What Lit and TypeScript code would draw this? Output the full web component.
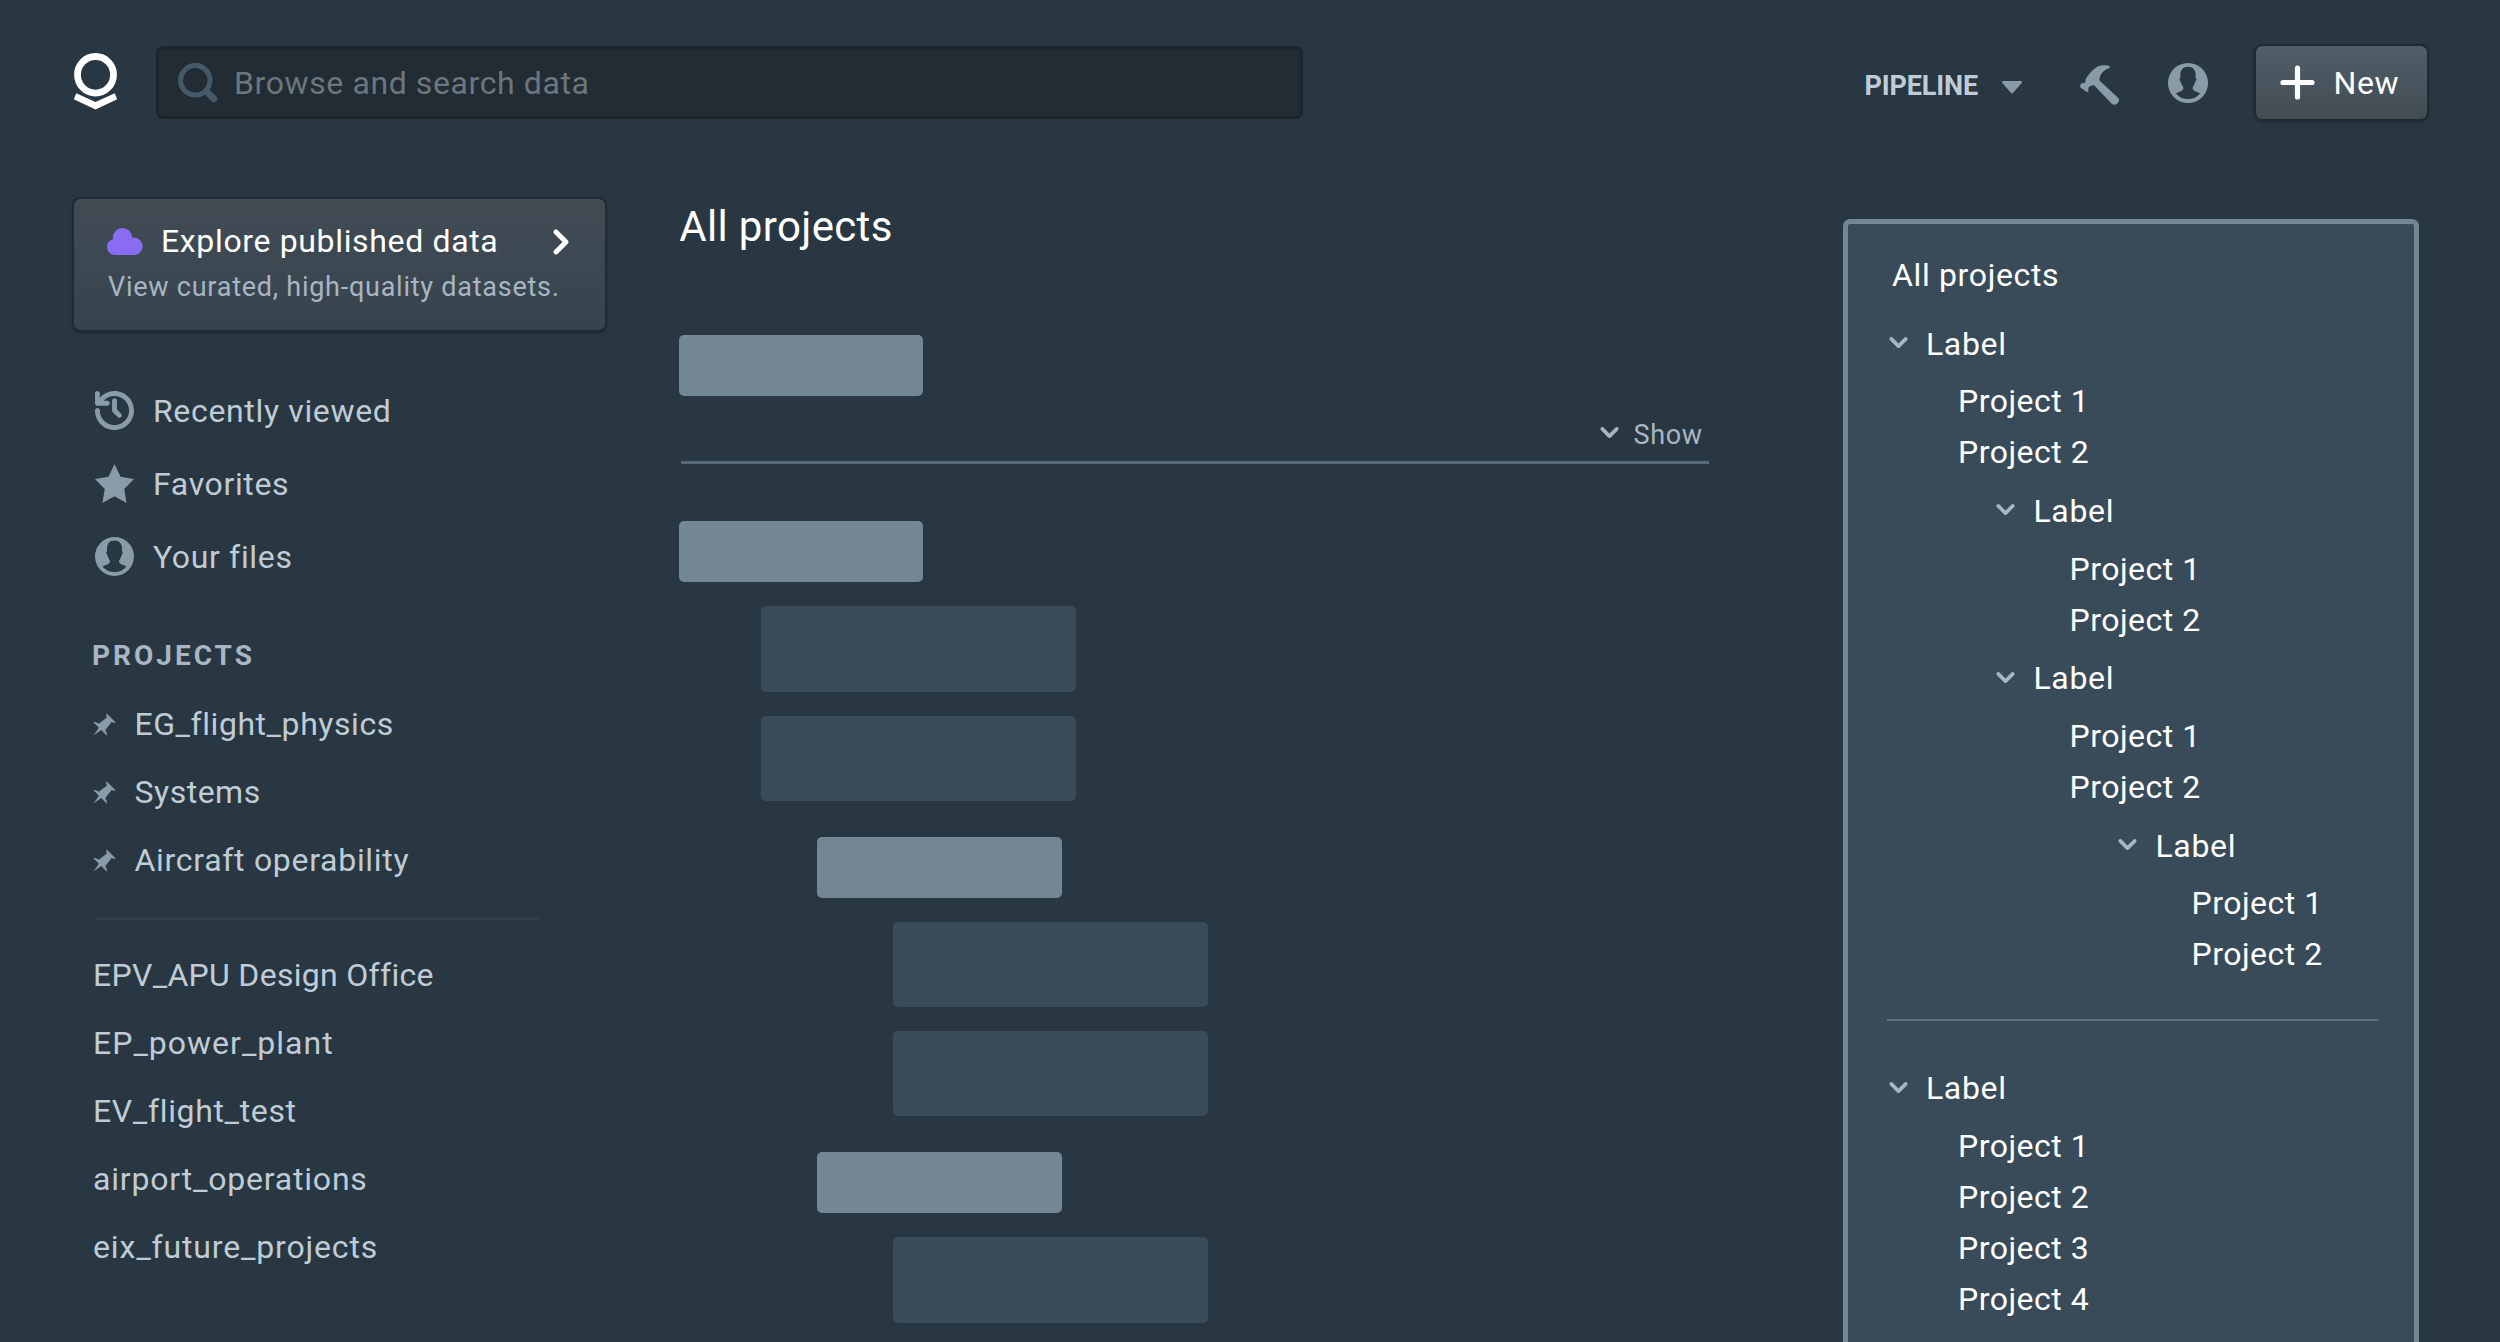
import { LitElement, html, css, svg } from "lit";
import { customElement } from "lit/decorators.js";

const CHEVRON_DOWN =
  "M12 5c-.28 0-.53.11-.71.29L8 8.59l-3.29-3.3a1.003 1.003 0 00-1.42 1.42l4 4c.18.18.43.29.71.29s.53-.11.71-.29l4-4A1.003 1.003 0 0012 5z";
const CHEVRON_RIGHT =
  "M10.71 7.29l-4-4a1.003 1.003 0 00-1.42 1.42L8.59 8 5.3 11.29c-.19.18-.3.43-.3.71a1.003 1.003 0 001.71.71l4-4c.18-.18.29-.43.29-.71 0-.28-.11-.53-.29-.71z";
const CARET_DOWN =
  "M12 6.5c0-.28-.22-.5-.5-.5h-7a.495.495 0 00-.37.83l3.5 4c.09.1.22.17.37.17s.28-.07.37-.17l3.5-4c.08-.09.13-.2.13-.33z";
const STAR =
  "M16 6.11l-5.53-.84L8 0 5.53 5.27 0 6.11l4 4.1L3.06 16 8 13.27 12.94 16 12 10.21l4-4.1z";
const HISTORY =
  "M8 3c-.55 0-1 .45-1 1v4c0 .28.11.53.29.71l2 2a1.003 1.003 0 001.42-1.42L9 7.59V4c0-.55-.45-1-1-1zm0-3a7.951 7.951 0 00-6 2.74V1c0-.55-.45-1-1-1S0 .45 0 1v4c0 .55.45 1 1 1h4c.55 0 1-.45 1-1s-.45-1-1-1H3.54c1.1-1.22 2.69-2 4.46-2 3.31 0 6 2.69 6 6s-2.69 6-6 6-6-2.69-6-6c0-.55-.45-1-1-1s-1 .45-1 1c0 4.42 3.58 8 8 8s8-3.58 8-8-3.58-8-8-8z";
const USER =
  "M8 0a8 8 0 100 16A8 8 0 008 0zM8 1.45c2 0 3.05 1.4 3.05 3.05 0 .5 0 1 .08 1.45.35.25.3 1-.13 1.35-.3 1-.65 1.75-1.1 2.3v.75c.35.95 2.2 1.05 2.95 1.85A6.3 6.3 0 018 14.4a6.3 6.3 0 01-4.85-2.2c.75-.8 2.6-.9 2.95-1.85V9.6C5.65 9.05 5.3 8.3 5 7.3c-.43-.35-.48-1.1-.13-1.35.08-.45.08-.95.08-1.45C4.95 2.85 6 1.45 8 1.45z";
const PIN =
  "M9.41.92c-.51.51-.41 1.5.15 2.56L4.34 7.54C2.8 6.48 1.45 6.05.92 6.58l3.54 3.54-3.54 4.95 4.95-3.54 3.54 3.54c.53-.53.1-1.88-.96-3.42l4.06-5.22c1.06.56 2.04.66 2.55.15L9.41.92z";

const icon = (path: string, size: number, cls = "") => html`
  <svg class="icon ${cls}" width=${size} height=${size} viewBox="0 0 16 16">
    ${svg`<path fill="currentColor" fill-rule="evenodd" d=${path}></path>`}
  </svg>
`;

interface TreeNode {
  label: string;
  children?: TreeNode[];
}
const leaves = (n: number): TreeNode[] =>
  Array.from({ length: n }, (_, i) => ({ label: `Project ${i + 1}` }));

const TREE: TreeNode[] = [
  {
    label: "Label",
    children: [
      ...leaves(2),
      { label: "Label", children: leaves(2) },
      {
        label: "Label",
        children: [...leaves(2), { label: "Label", children: leaves(2) }],
      },
    ],
  },
];
const TREE_BOTTOM: TreeNode[] = [{ label: "Label", children: leaves(4) }];

interface ProjectLink {
  name: string;
  tracking: number;
}
const PINNED: ProjectLink[] = [
  { name: "EG_flight_physics", tracking: 0.55 },
  { name: "Systems", tracking: 0.5 },
  { name: "Aircraft operability", tracking: 0.7 },
];
const PROJECTS: ProjectLink[] = [
  { name: "EPV_APU Design Office", tracking: 0.3 },
  { name: "EP_power_plant", tracking: 1 },
  { name: "EV_flight_test", tracking: 0.65 },
  { name: "airport_operations", tracking: 0.8 },
  { name: "eix_future_projects", tracking: 0.85 },
];

@customElement("app-top-bar")
export class AppTopBar extends LitElement {
  static styles = css`
    :host {
      display: flex;
      align-items: center;
      height: 165px;
      box-sizing: border-box;
      padding: 0 71px 0 73px;
    }
    .icon {
      flex: none;
      display: block;
    }
    .logo {
      width: 45px;
      height: 58px;
      margin: 0 38px 3px 0;
    }
    .search {
      display: flex;
      align-items: center;
      box-sizing: border-box;
      width: 1147px;
      height: 73px;
      padding-left: 19px;
      border: 3px solid #1c272d;
      border-radius: 7px;
      background: #212c34;
      color: #6c767c;
      gap: 16px;
      letter-spacing: 0.6px;
    }
    .search span,
    .new span {
      padding-top: 1px;
    }
    .spacer {
      flex: 1;
    }
    .workspace {
      display: flex;
      align-items: center;
      font-size: 27px;
      font-weight: 700;
      letter-spacing: -0.15px;
      color: #bfccd6;
      line-height: 40px;
      padding-top: 6px;
    }
    .workspace span {
      width: 127px;
    }
    .muted {
      color: #8a9ba8;
    }
    .hammer {
      margin: 5px 48px 0 48px;
      color: #8a9ba8;
    }
    .account {
      color: #8a9ba8;
    }
    .new {
      display: flex;
      align-items: center;
      box-sizing: border-box;
      width: 175px;
      height: 77px;
      margin-left: 46.500px;
      padding-left: 23.500px;
      gap: 19px;
      border: 2px solid #202b32;
      border-radius: 8px;
      background: linear-gradient(#525e67, #414c55) padding-box;
      color: #fff;
      box-shadow: 0 1px 2px #1f2a31;
    }
  `;
  render() {
    return html`
      <svg class="icon logo" viewBox="0 0 45 58">
        <ellipse cx="22.5" cy="22.8" rx="18" ry="18.3" fill="none" stroke="#fff" stroke-width="6.8" />
        <path d="M3.3 41.2 22.5 50 41.7 41.2 44.2 47.3 22.5 57.5.8 47.3z" fill="#fff" />
      </svg>
      <div class="search">
        <svg class="icon" width="40" height="40" viewBox="0 0 40 40" fill="none" stroke="#465968">
          <circle cx="17.3" cy="17.3" r="14.7" stroke-width="5" />
          <path d="M28.5 28.5 35.9 35.9" stroke-width="7" stroke-linecap="round" />
        </svg>
        <span>Browse and search data</span>
      </div>
      <div class="spacer"></div>
      <div class="workspace"><span>PIPELINE</span>${icon(CARET_DOWN, 40, "muted")}</div>
      <svg class="icon hammer" width="40" height="41" viewBox="0 0 40 41">
        <path
          fill="currentColor"
          d="M30 1.2C27-.3 20-.2 16.5 2.200 12 5 8 10 5.5 14.5c.3 2.5-1 4-2.700 3.700-1.300-.4-2.200.8-2.500 2.300-.3 1.500 0 2.100 1.200 2.800l4.800 3.500c1 .6 2 0 2.200-1.300-.2-1.700-.5-3 1-4 1.300-1 3-.5 4.300-1.500L31 38c2 2.500 5 2 6.800 0 1.700-2 1.500-4 .2-5.200L19.500 15.500C19.300 13 20 10.500 22 8c2-2.500 5-4.400 7.500-5z"
        />
      </svg>
      ${icon(USER, 40, "account")}
      <div class="new">
        <svg class="icon" width="35" height="35" viewBox="0 0 35 35" stroke="#fff" stroke-width="5.2" stroke-linecap="round">
          <path d="M17.5 3v29M3 17.5h29" />
        </svg>
        <span>New</span>
      </div>
    `;
  }
}

@customElement("app-side-nav")
export class AppSideNav extends LitElement {
  static styles = css`
    :host {
      display: block;
      color: #bfccd6;
    }
    .icon {
      flex: none;
      display: block;
      color: #8a9ba8;
    }
    .card {
      box-sizing: border-box;
      width: 535px;
      height: 135px;
      border: 2px solid #202b32;
      border-radius: 8px;
      background: linear-gradient(#414c55, #37434e) padding-box;
      padding: 21px 24px 0 33px;
      box-shadow: 0 1px 2px #1f2a31;
    }
    .card-title {
      display: flex;
      align-items: center;
      height: 42px;
      color: #fff;
    }
    .card-title span {
      flex: 1;
      padding-left: 18px;
    }
    .card-title .chevron {
      color: #fff;
      margin-top: 1px;
    }
    .card-text {
      font-size: 27px;
      letter-spacing: 0.75px;
      line-height: 44px;
      margin-top: 3px;
      padding-left: 1px;
      color: #a7b6c2;
    }
    .links {
      display: flex;
      flex-direction: column;
      padding: 42px 0 0 23px;
    }
    .link {
      display: flex;
      align-items: center;
      height: 73px;
      gap: 19px;
    }
    .heading {
      font-size: 28px;
      font-weight: 700;
      letter-spacing: 3px;
      line-height: 48px;
      color: #a7b6c2;
      padding: 38.500px 0 10.500px 20px;
    }
    .row {
      display: flex;
      align-items: center;
      height: 68px;
      padding-left: 19.500px;
      gap: 18px;
    }
    .row.plain {
      padding-left: 21px;
    }
    .divider {
      width: 444px;
      height: 2.500px;
      margin: 23px 0 21px 23px;
      background: #2f3f4c;
    }
  `;
  render() {
    return html`
      <div class="card">
        <div class="card-title">
          <svg class="icon" width="36" height="27" viewBox="0 0 36 27" fill="#8a6cf3">
            <circle cx="15.5" cy="9.7" r="9.7" />
            <circle cx="8" cy="19" r="8" />
            <circle cx="26.9" cy="18.3" r="8.7" />
            <path d="M6.5 11h19.5l1 16H8z" />
          </svg>
          <span>Explore published data</span>
          ${icon(CHEVRON_RIGHT, 40, "chevron")}
        </div>
        <div class="card-text">View curated, high-quality datasets.</div>
      </div>
      <div class="links">
        <div class="link">${icon(HISTORY, 39)}<span>Recently viewed</span></div>
        <div class="link">${icon(STAR, 39)}<span>Favorites</span></div>
        <div class="link">${icon(USER, 39)}<span>Your files</span></div>
      </div>
      <div class="heading">PROJECTS</div>
      ${PINNED.map(
        (p) => html`<div class="row" style="letter-spacing:${p.tracking}px">
          ${icon(PIN, 25)}<span>${p.name}</span>
        </div>`
      )}
      <div class="divider"></div>
      ${PROJECTS.map(
        (p) => html`<div class="row plain" style="letter-spacing:${p.tracking}px">
          <span>${p.name}</span>
        </div>`
      )}
    `;
  }
}

@customElement("app-project-list")
export class AppProjectList extends LitElement {
  static styles = css`
    :host {
      display: flex;
      flex-direction: column;
      color: #fff;
    }
    .title {
      font-size: 42px;
      letter-spacing: 0.35px;
      line-height: 60px;
      padding: 1px 0 0 0.500px;
    }
    .chip {
      width: 244.500px;
      height: 61px;
      border-radius: 5px;
      background: #738694;
    }
    .first {
      margin-top: 77.700px;
    }
    .show {
      display: flex;
      align-items: center;
      justify-content: flex-end;
      gap: 9px;
      height: 65px;
      margin-left: 2px;
      padding-right: 6px;
      border-bottom: 3px solid #566979;
      color: #a7b6c2;
      font-size: 27px;
      line-height: 40px;
    }
    .show span {
      padding-top: 13px;
    }
    .icon {
      display: block;
      padding-top: 9px;
    }
    .group {
      display: flex;
      flex-direction: column;
      gap: 24px;
      margin-top: 57.600px;
    }
    .card {
      width: 315px;
      height: 85.300px;
      border-radius: 5px;
      background: #394b59;
      margin-left: 82.700px;
    }
    .group.nested {
      margin: 36px 0 0 138.700px;
    }
    .nested .card {
      margin-left: 76px;
    }
  `;
  render() {
    return html`
      <div class="title">All projects</div>
      <div class="chip first"></div>
      <div class="show">${icon(CHEVRON_DOWN, 29)}<span>Show</span></div>
      <div class="group">
        <div class="chip"></div>
        <div class="card"></div>
        <div class="card"></div>
      </div>
      <div class="group nested">
        <div class="chip"></div>
        <div class="card"></div>
        <div class="card"></div>
      </div>
      <div class="group nested">
        <div class="chip"></div>
        <div class="card"></div>
      </div>
    `;
  }
}

@customElement("app-outline")
export class AppOutline extends LitElement {
  static styles = css`
    :host {
      display: block;
      box-sizing: border-box;
      width: 576px;
      height: 1200px;
      border: 5px solid #738694;
      border-radius: 7px;
      background: #394b59;
      color: #fff;
      padding: 19.500px 36px 0 39px;
    }
    .title {
      height: 68px;
      line-height: 65px;
      padding-left: 5px;
    }
    .label {
      display: flex;
      align-items: center;
      height: 65.200px;
      margin-left: -3px;
      gap: 13px;
    }
    .icon {
      flex: none;
      display: block;
      color: #a7b6c2;
      margin-bottom: 2px;
    }
    .leaf {
      height: 51.100px;
      line-height: 51px;
      padding-left: 71px;
      letter-spacing: 0.5px;
    }
    .nested {
      padding-left: 107.500px;
    }
    .nested .leaf {
      padding-left: 75px;
    }
    .nested .nested {
      padding-left: 122px;
    }
    .divider {
      height: 2.500px;
      background: #5c7080;
      margin: 38.300px 0 34.500px;
    }
  `;
  private node(n: TreeNode, depth: number): unknown {
    if (!n.children) return html`<div class="leaf">${n.label}</div>`;
    return html`
      <div class=${depth ? "nested" : "root"}>
        <div class="label">${icon(CHEVRON_DOWN, 29)}<span>${n.label}</span></div>
        ${n.children.map((c) => this.node(c, depth + 1))}
      </div>
    `;
  }
  render() {
    return html`
      <div class="title">All projects</div>
      ${TREE.map((n) => this.node(n, 0))}
      <div class="divider"></div>
      ${TREE_BOTTOM.map((n) => this.node(n, 0))}
    `;
  }
}

@customElement("app-root")
export class AppRoot extends LitElement {
  static styles = css`
    :host {
      display: block;
      width: 2500px;
      height: 1342px;
      overflow: hidden;
      background: #293742;
      font: 32px Roboto, "Liberation Sans", sans-serif;
      letter-spacing: 0.65px;
      white-space: nowrap;
    }
    .body {
      display: grid;
      grid-template-columns: 606.700px 1030px 710px;
      justify-content: start;
      align-items: start;
      padding-left: 72px;
    }
    .nav {
      width: 535px;
      margin-top: 32px;
    }
    .list {
      width: 1030px;
      margin-top: 31px;
    }
    .outline {
      margin: 53.500px 0 0 134.300px;
    }
  `;
  render() {
    return html`
      <app-top-bar></app-top-bar>
      <div class="body">
        <app-side-nav class="nav"></app-side-nav>
        <app-project-list class="list"></app-project-list>
        <app-outline class="outline"></app-outline>
      </div>
    `;
  }
}
